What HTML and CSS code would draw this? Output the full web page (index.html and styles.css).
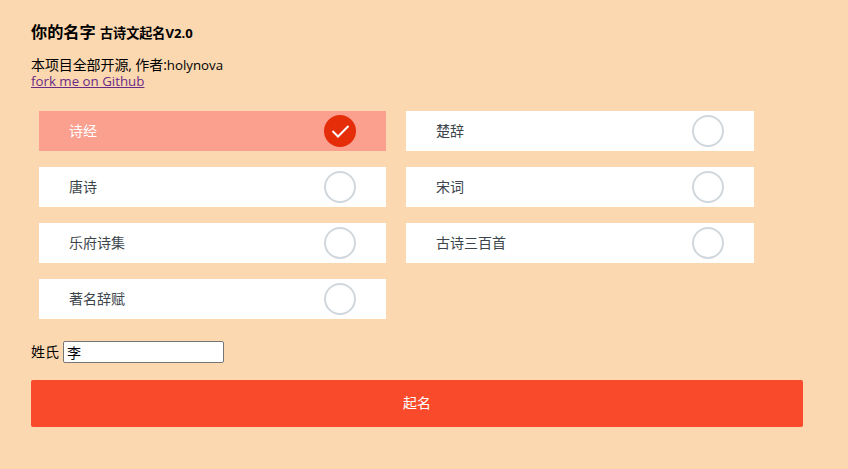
FILE: index.html
```html
<!DOCTYPE html>
<html lang="zh-CN">
<head>
<meta charset="utf-8">
<title>你的名字</title>
<link rel="stylesheet" href="styles.css">
</head>
<body>
<main class="page">
  <h1 class="title">你的名字 <small>古诗文起名V2.0</small></h1>
  <div class="intro">
    <div>本项目全部开源, 作者:<span class="latin">holynova</span></div>
    <a class="latin" href="#">fork me on Github</a>
  </div>
  <div class="books">
    <label class="book selected"><span>诗经</span><i class="radio"><svg viewBox="0 0 32 32"><path d="M8.500 16l5.500 5.500L24.500 11"/></svg></i></label>
    <label class="book"><span>楚辞</span><i class="radio"></i></label>
    <label class="book"><span>唐诗</span><i class="radio"></i></label>
    <label class="book"><span>宋词</span><i class="radio"></i></label>
    <label class="book"><span>乐府诗集</span><i class="radio"></i></label>
    <label class="book"><span>古诗三百首</span><i class="radio"></i></label>
    <label class="book"><span>著名辞赋</span><i class="radio"></i></label>
  </div>
  <div class="family"><label for="family">姓氏</label><input id="family" type="text" value="李"></div>
  <button class="go" type="button">起名</button>
</main>
</body>
</html>
```
FILE: styles.css
```css
* { box-sizing: border-box; }
body {
  margin: 0;
  background: #fbd8b0;
  color: #000;
  font: 14px/16px "Open Sans", "Noto Sans CJK SC", sans-serif;
}
.page { width: 772px; margin-left: 31px; padding-top: 21px; }
.title { margin: 0; font-size: 16.200px; line-height: 22px; font-weight: 700; white-space: nowrap; }
.title small { font-size: 13.100px; }
.intro { display: flex; flex-direction: column; align-items: flex-start; height: 31px; margin-top: 14px; }
.intro div { height: 15px; line-height: 14px; letter-spacing: -0.100px; }
.latin { font-size: 13.300px; letter-spacing: 0; }
a.latin { color: #6b2a85; line-height: 16px; }
.books {
  display: grid;
  grid-template-columns: 347px 348px;
  grid-auto-rows: 40px;
  gap: 16px 20px;
  margin: 22px 0 0 8px;
}
.book {
  display: flex;
  align-items: center;
  justify-content: space-between;
  padding: 0 30px;
  background: #fff;
  color: #3c454c;
}
.radio { width: 32px; height: 32px; border: 2px solid #d1d7dc; border-radius: 50%; }
.selected { background: #fb9f8f; color: #fff; }
.selected .radio { border: 0; background: #e52d09; }
.radio svg { display: block; width: 32px; height: 32px; fill: none; stroke: #fff; stroke-width: 2; }
.family { display: flex; align-items: center; gap: 4px; height: 22px; margin-top: 22px; }
.family input { width: 161px; height: 22px; padding: 0 3px 1px; border: 1px solid #767676; border-radius: 2px; background: #fff; font: inherit; }
.go { display: block; width: 772px; height: 47px; margin-top: 17px; padding: 0 0 1px; border: 0; border-radius: 2px; background: #f94b2b; color: #fff; font: inherit; }
```
